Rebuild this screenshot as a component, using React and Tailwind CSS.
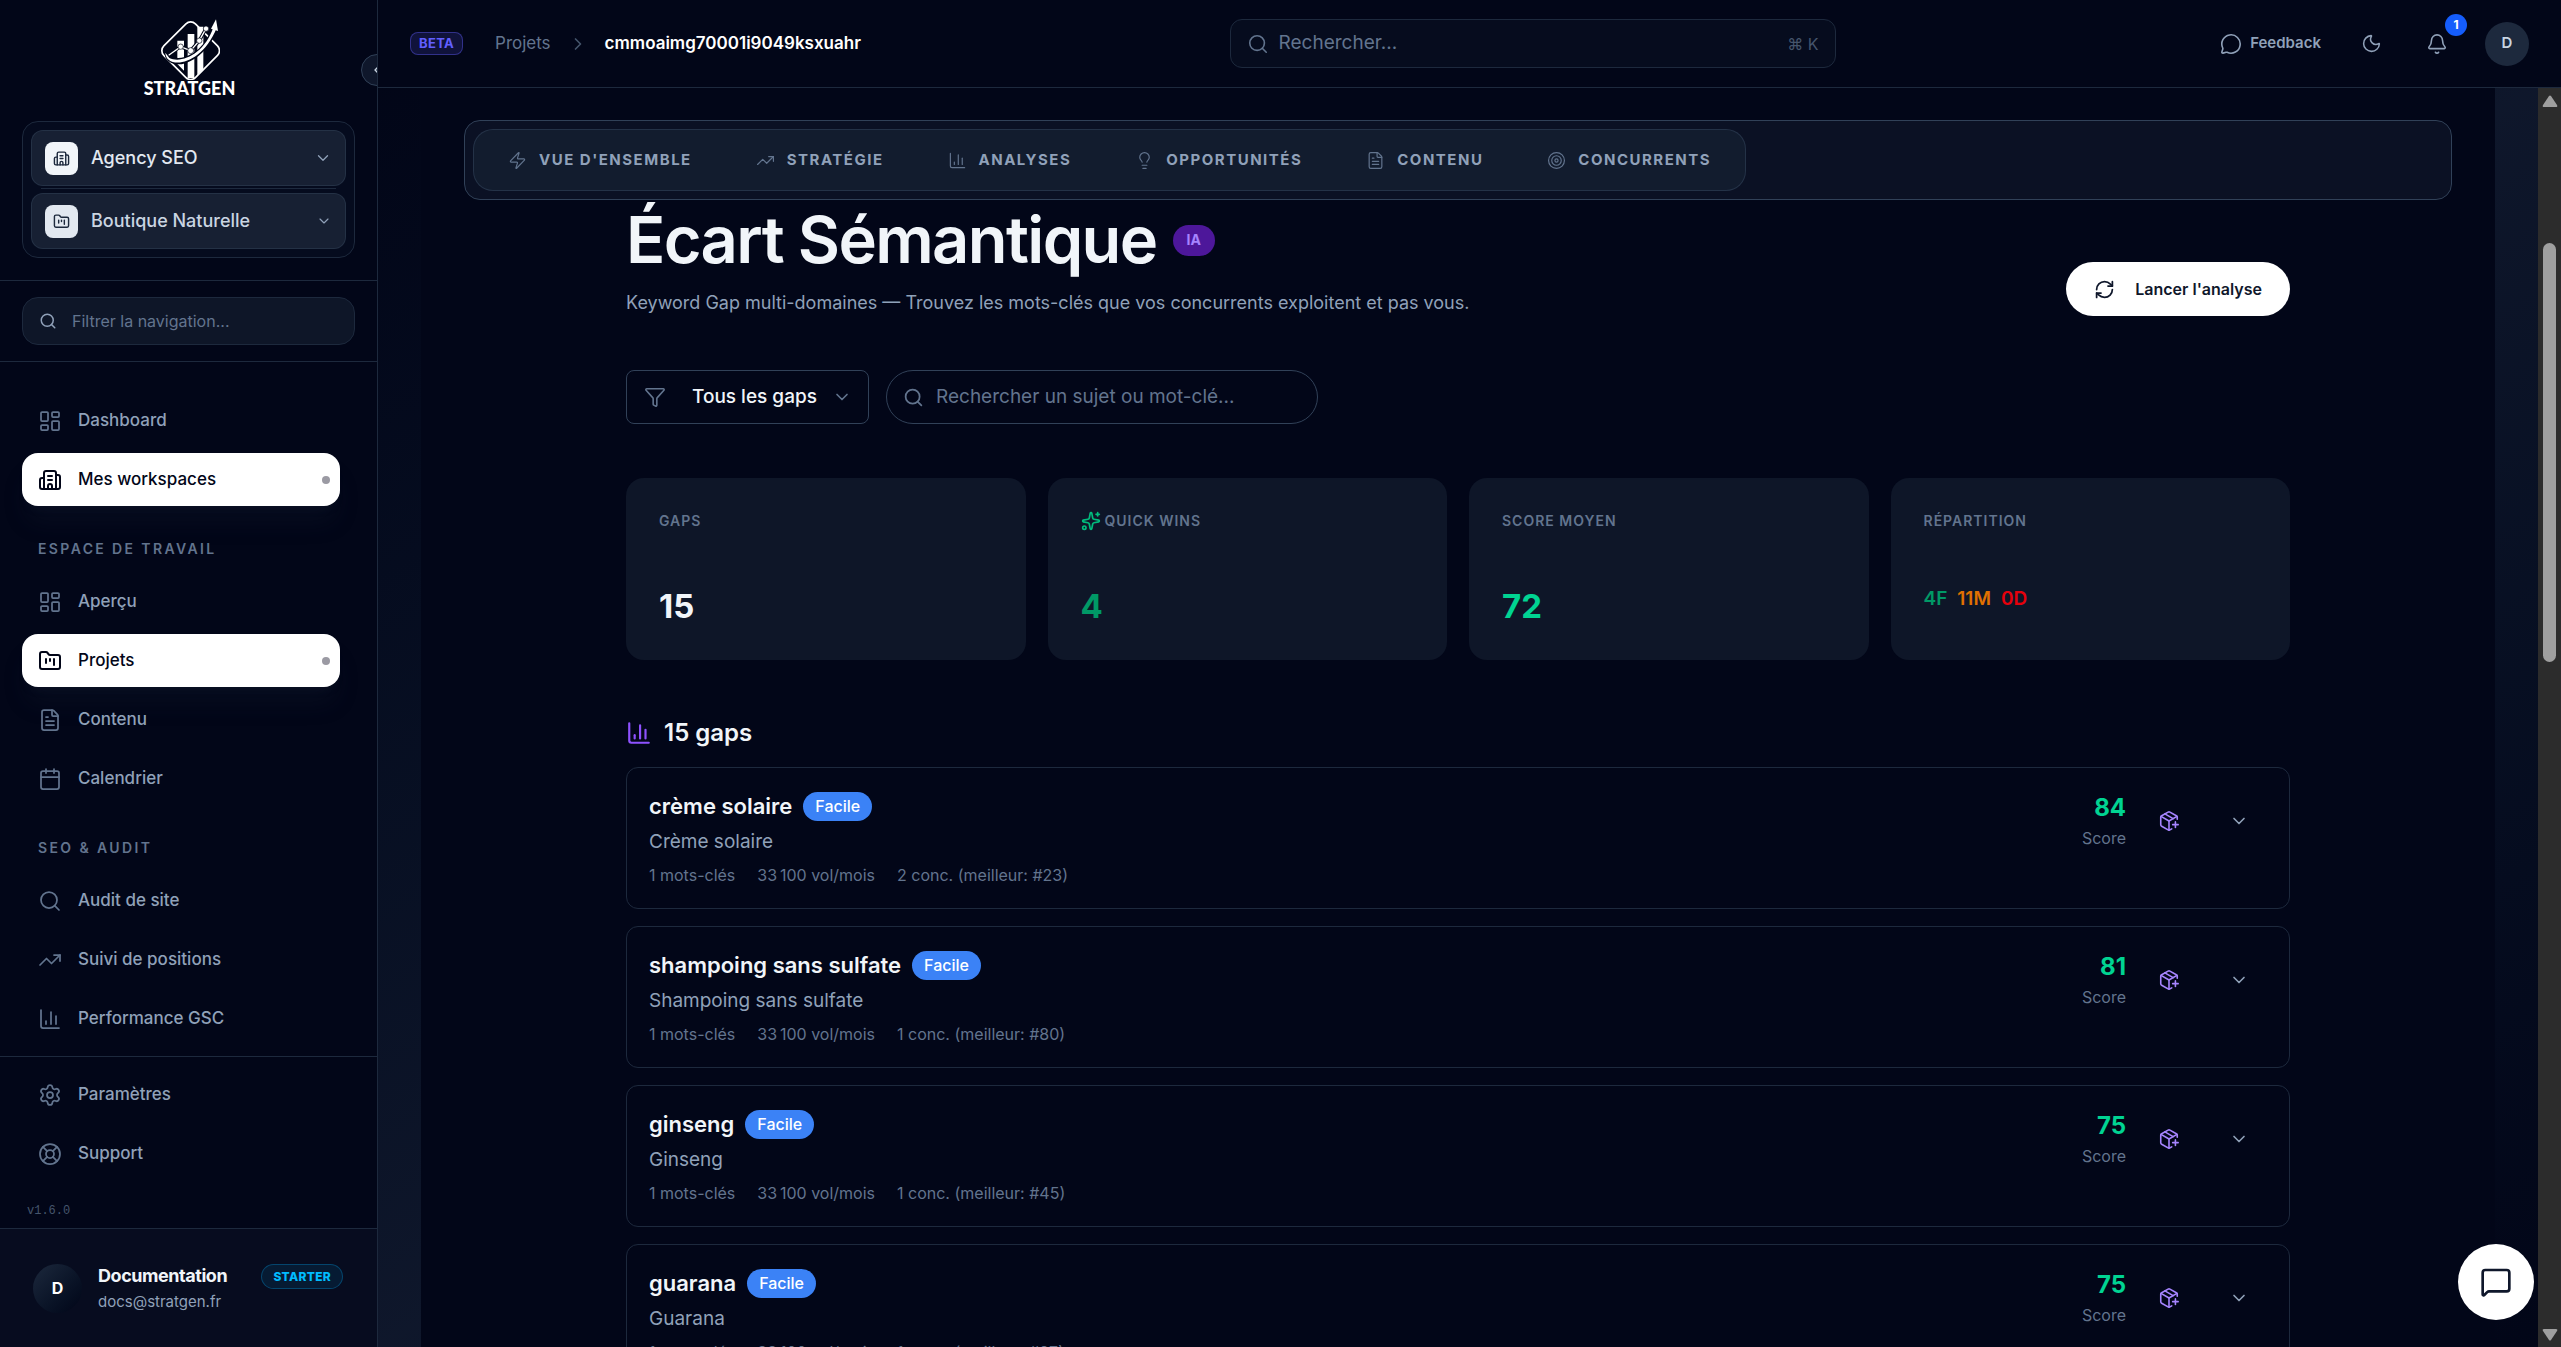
import {
  Bell,
  Building2,
  Calendar,
  ChartColumn,
  ChevronDown,
  ChevronLeft,
  ChevronRight,
  FileText,
  FolderKanban,
  Funnel,
  LayoutDashboard,
  Lightbulb,
  LifeBuoy,
  MessageCircle,
  MessageSquare,
  Moon,
  PackagePlus,
  RefreshCw,
  Search,
  Settings,
  Sparkles,
  Target,
  TrendingUp,
  Zap,
} from 'lucide-react'
import clsx from 'clsx'

const mainLinks = [
  { label: 'Dashboard', icon: LayoutDashboard },
  { label: 'Mes workspaces', icon: Building2, active: true },
]

const workspaceLinks = [
  { label: 'Aperçu', icon: LayoutDashboard },
  { label: 'Projets', icon: FolderKanban, active: true },
  { label: 'Contenu', icon: FileText },
  { label: 'Calendrier', icon: Calendar },
]

const seoLinks = [
  { label: 'Audit de site', icon: Search },
  { label: 'Suivi de positions', icon: TrendingUp },
  { label: 'Performance GSC', icon: ChartColumn },
]

const bottomLinks = [
  { label: 'Paramètres', icon: Settings },
  { label: 'Support', icon: LifeBuoy },
]

const tabs = [
  { label: "Vue d'ensemble", icon: Zap },
  { label: 'Stratégie', icon: TrendingUp },
  { label: 'Analyses', icon: ChartColumn },
  { label: 'Opportunités', icon: Lightbulb },
  { label: 'Contenu', icon: FileText },
  { label: 'Concurrents', icon: Target },
]

const gaps = [
  { keyword: 'crème solaire', topic: 'Crème solaire', competitors: 2, best: 23, score: 84 },
  { keyword: 'shampoing sans sulfate', topic: 'Shampoing sans sulfate', competitors: 1, best: 80, score: 81 },
  { keyword: 'ginseng', topic: 'Ginseng', competitors: 1, best: 45, score: 75 },
  { keyword: 'guarana', topic: 'Guarana', competitors: 1, best: 27, score: 75 },
]

function Logo() {
  return (
    <div className="flex flex-col items-center pl-0.5">
      <svg viewBox="0 0 180 186" className="h-[62px] w-[60px]" fill="none" aria-hidden="true">
        <rect x="25" y="31" width="134" height="134" rx="20" transform="rotate(45 92 98)" stroke="#fff" strokeWidth="5" />
        <path d="M52 68h20v90l-20-20zM83 48h20v132H83zM112 26h18v128l-18 18z" fill="#fff" />
        {/* dark outline under the arrow */}
        <path
          d="M18 106C22 152 116 152 170 32L160 28C136 108 64 138 28 118z"
          fill="#020618"
          stroke="#020618"
          strokeWidth="9"
        />
        <path d="M22 112l40-26 30 12 26-30 20-36" stroke="#020618" strokeWidth="10" />
        <path d="M26 112l36-26 30 12 26-30 20-36" stroke="#fff" strokeWidth="4" />
        <g fill="#fff" stroke="#020618" strokeWidth="2">
          <circle cx="62" cy="86" r="8" />
          <circle cx="92" cy="98" r="9" />
          <circle cx="118" cy="68" r="8" />
          <circle cx="138" cy="32" r="8" />
        </g>
        <path d="M16 104C18 154 122 148 170 30L160 28C134 108 64 138 28 120z" fill="#fff" />
        <path d="M168 4l-15 28 21 7z" fill="#fff" />
      </svg>
      <span className="font-[Lato,sans-serif] text-lg leading-4 font-black text-white">STRATGEN</span>
    </div>
  )
}

function Switcher({ label, icon: Icon, bright }) {
  return (
    <button
      type="button"
      className="flex h-14 w-full items-center rounded-xl border border-slate-700/50 bg-[#172033] px-[13px]"
    >
      <span
        className={clsx(
          'flex size-[33px] items-center justify-center rounded-lg text-slate-800',
          bright ? 'bg-slate-100' : 'bg-slate-200'
        )}
      >
        <Icon size={17} strokeWidth={2} />
      </span>
      <span
        className={clsx(
          'ml-[13px] flex-1 text-left text-lg font-medium',
          bright ? 'text-slate-200' : 'text-slate-300'
        )}
      >
        {label}
      </span>
      <ChevronDown size={bright ? 18 : 16} className="text-slate-400" strokeWidth={1.75} />
    </button>
  )
}

function NavLink({ label, icon: Icon, active }) {
  return (
    <a
      href="#"
      className={clsx(
        'flex h-[53px] items-center gap-4 rounded-2xl px-4 text-[17px] font-medium',
        active ? 'bg-white text-slate-950 shadow-xl shadow-slate-800/20' : 'text-slate-400'
      )}
    >
      <Icon size={24} strokeWidth={active ? 2 : 1.75} className={active ? 'text-slate-950' : 'text-slate-500'} />
      <span className="flex-1">{label}</span>
      {active ? <span className="-mr-1.5 size-2 rounded-full bg-[#9b9aa3]" /> : null}
    </a>
  )
}

function NavSection({ title, links }) {
  return (
    <div>
      {title ? (
        <h2 className="mt-8 mb-[15px] pl-4 text-sm leading-[22px] font-semibold tracking-[0.17em] text-slate-500 uppercase">
          {title}
        </h2>
      ) : null}
      <div className="flex flex-col gap-1.5">
        {links.map((link) => (
          <NavLink key={link.label} {...link} />
        ))}
      </div>
    </div>
  )
}

function Sidebar() {
  return (
    <aside className="relative flex w-[378px] shrink-0 flex-col overflow-hidden border-r border-slate-800 bg-slate-950">
      <div className="px-[22px] pt-[18px] pb-[22px]">
        <Logo />
        <div className="mt-[25px] rounded-2xl border border-slate-800 bg-[#050b1e] p-2">
          <Switcher label="Agency SEO" icon={Building2} bright />
          <div className="mx-2.5 my-0.5 h-px bg-slate-800" />
          <div className="pt-0.5">
            <Switcher label="Boutique Naturelle" icon={FolderKanban} />
          </div>
        </div>
      </div>

      <div className="border-y border-slate-800 px-[22px] py-4">
        <label className="flex h-12 items-center gap-[15px] rounded-2xl border border-slate-800 bg-[#0e1628] px-4">
          <Search size={18} className="text-slate-400" />
          <input
            type="search"
            aria-label="Filtrer la navigation"
            placeholder="Filtrer la navigation..."
            className="min-w-0 flex-1 bg-transparent text-base text-slate-300 outline-none placeholder:text-slate-500"
          />
        </label>
      </div>

      <nav className="min-h-0 flex-1 overflow-hidden pt-8 pr-[37px] pl-[22px]">
        <NavSection links={mainLinks} />
        <NavSection title="Espace de travail" links={workspaceLinks} />
        <NavSection title="SEO & Audit" links={seoLinks} />
      </nav>

      <div className="border-t border-slate-800 px-[22px] pt-[11px]">
        <NavSection links={bottomLinks} />
        <p className="mt-[19px] mb-[5px] pl-[5px] font-['Liberation_Mono',monospace] text-xs leading-6 text-slate-600">
          v1.6.0
        </p>
      </div>

      <div className="flex h-[119px] items-center border-t border-slate-800 bg-[#070c1f] pr-[34px] pl-[33px]">
        <div className="flex size-[49px] shrink-0 items-center justify-center rounded-full bg-linear-to-br from-slate-800 to-slate-950 text-base font-bold text-white">
          D
        </div>
        <div className="ml-4 flex-1">
          <div className="flex items-center justify-between">
            <span className="text-lg leading-7 font-bold tracking-tight text-slate-100">Documentation</span>
            <span className="rounded-full border border-sky-500/30 bg-sky-500/10 px-[11px] text-xs leading-[23px] font-extrabold tracking-wide text-sky-400">
              STARTER
            </span>
          </div>
          <p className="text-[15px] leading-6 text-slate-400">docs@stratgen.fr</p>
        </div>
      </div>

      <button
        type="button"
        aria-label="Réduire le menu"
        className="absolute top-[54px] -right-4 flex size-8 items-center justify-center rounded-full border border-slate-700 bg-slate-900 text-slate-300"
      >
        <ChevronLeft size={16} />
      </button>
    </aside>
  )
}

function TopBar() {
  return (
    <header className="flex h-[88px] shrink-0 items-center justify-between border-b border-slate-800 bg-slate-950 px-8">
      <div className="flex items-center">
        <span className="rounded-lg border border-indigo-500/40 bg-indigo-500/15 px-2 text-[13px] leading-[21px] font-bold tracking-wide text-[#615fff]">
          BETA
        </span>
        <nav aria-label="Fil d'Ariane" className="ml-8 flex items-center text-[17px]">
          <a href="#" className="text-slate-500">Projets</a>
          <ChevronRight size={20} className="mx-[17px] text-slate-600" />
          <span className="font-semibold text-white">cmmoaimg70001i9049ksxuahr</span>
        </nav>
      </div>

      <label className="mr-4 flex h-[49px] w-[606px] items-center rounded-xl border border-slate-800 bg-[#060c1e] px-4">
        <Search size={22} strokeWidth={1.75} className="text-slate-500" />
        <input
          type="search"
          aria-label="Rechercher"
          placeholder="Rechercher..."
          className="ml-2.5 min-w-0 flex-1 bg-transparent text-[19px] text-slate-300 outline-none placeholder:text-slate-500"
        />
        <kbd className="font-[Inter,'DejaVu_Sans',sans-serif] text-base text-slate-600">⌘ K</kbd>
      </label>

      <div className="flex items-center text-slate-400">
        <button type="button" className="flex items-center gap-2 text-[15px] font-semibold">
          <MessageCircle size={22} strokeWidth={1.75} />
          Feedback
        </button>
        <button type="button" aria-label="Thème" className="ml-10">
          <Moon size={21} strokeWidth={1.75} />
        </button>
        <button type="button" aria-label="Notifications" className="relative ml-11">
          <Bell size={22} strokeWidth={1.75} />
          <span className="absolute -top-[19px] -right-[19px] flex size-[22px] items-center justify-center rounded-full bg-[#155dfc] text-xs font-bold text-white">
            1
          </span>
        </button>
        <button
          type="button"
          aria-label="Compte"
          className="ml-[37px] flex size-11 items-center justify-center rounded-full bg-slate-800 text-[15px] font-semibold text-slate-300"
        >
          D
        </button>
      </div>
    </header>
  )
}

function SectionTabs() {
  return (
    <div className="mx-[43px] flex rounded-2xl border border-slate-700 bg-[#0b1124] p-2">
      <nav aria-label="Sections du projet" className="flex rounded-[20px] border border-slate-700/60 bg-[#121c2e] px-0.5">
        {tabs.map(({ label, icon: Icon }) => (
          <a
            key={label}
            href="#"
            className="flex h-[60px] items-center gap-3 px-8 text-[15px] font-bold tracking-widest text-slate-400 uppercase"
          >
            <Icon size={19} strokeWidth={1.5} className="text-slate-500" />
            {label}
          </a>
        ))}
      </nav>
    </div>
  )
}

function PageHeader() {
  return (
    <div className="flex items-end justify-between">
      <div>
        <div className="flex items-center gap-4">
          <h1 className="text-[65px] leading-[66px] font-semibold tracking-tight text-slate-100">Écart Sémantique</h1>
          <span className="flex h-[31px] items-center rounded-full bg-violet-900 px-3.5 text-sm font-bold text-violet-400">
            IA
          </span>
        </div>
        <p className="mt-4 text-lg leading-[27px] text-slate-400">
          Keyword Gap multi-domaines — Trouvez les mots-clés que vos concurrents exploitent et pas vous.
        </p>
      </div>
      <button
        type="button"
        className="flex h-[54px] items-center gap-5 rounded-full bg-white px-7 text-base font-semibold text-slate-900"
      >
        <RefreshCw size={21} />
        Lancer l'analyse
      </button>
    </div>
  )
}

function Filters() {
  return (
    <div className="flex gap-[17px]">
      <label className="relative flex h-[54px] w-[243px] items-center rounded-lg border border-slate-700">
        <Funnel size={22} strokeWidth={1.75} className="pointer-events-none absolute left-[17px] text-slate-500" />
        <select
          aria-label="Filtrer les gaps"
          className="h-full w-full appearance-none bg-transparent pl-[65px] text-[19px] font-medium text-slate-100 outline-none"
        >
          <option>Tous les gaps</option>
        </select>
        <ChevronDown size={20} className="pointer-events-none absolute right-4 text-slate-500" />
      </label>
      <label className="flex h-[54px] w-[432px] items-center gap-3 rounded-full border border-slate-700 px-4">
        <Search size={21} className="text-slate-500" />
        <input
          type="search"
          aria-label="Rechercher un sujet"
          placeholder="Rechercher un sujet ou mot-clé..."
          className="min-w-0 flex-1 bg-transparent text-[19px] text-slate-300 outline-none placeholder:text-slate-500"
        />
      </label>
    </div>
  )
}

function StatCard({ label, icon, children }) {
  return (
    <div className="h-[182px] rounded-[18px] bg-[#0e1628] px-[33px] pt-8">
      <div className="flex h-[21px] items-center gap-1 text-sm font-semibold tracking-[1px] text-slate-500 uppercase">
        {icon}
        {label}
      </div>
      <div className="mt-[55px] text-[33px] leading-10 font-bold">{children}</div>
    </div>
  )
}

function Stats() {
  return (
    <div className="grid grid-cols-4 gap-[22px]">
      <StatCard label="Gaps">
        <span className="text-slate-100">15</span>
      </StatCard>
      <StatCard label="Quick wins" icon={<Sparkles size={20} className="text-emerald-500" />}>
        <span className="text-emerald-600">4</span>
      </StatCard>
      <StatCard label="Score moyen">
        <span className="text-emerald-400">72</span>
      </StatCard>
      <StatCard label="Répartition">
        <div className="flex gap-2.5 text-[19px] leading-[26px] font-semibold">
          <span className="text-emerald-600">4F</span>
          <span className="text-amber-600">11M</span>
          <span className="text-red-600">0D</span>
        </div>
      </StatCard>
    </div>
  )
}

function GapCard({ keyword, topic, competitors, best, score }) {
  return (
    <li className="flex h-[142px] justify-between rounded-xl border border-slate-800 px-[22px] pt-[22px]">
      <div>
        <div className="flex items-center gap-[11px]">
          <h3 className="text-[22px] leading-8 font-semibold text-slate-100">{keyword}</h3>
          <span className="rounded-full bg-[#3b82f6] px-3 text-base leading-[29px] font-medium text-white">Facile</span>
        </div>
        <p className="mt-1.5 text-[19px] leading-7 text-slate-400">{topic}</p>
        <div className="mt-[7px] flex gap-[22px] text-base leading-6 text-slate-500">
          <span>1 mots-clés</span>
          <span>33&#8239;100 vol/mois</span>
          <span>
            {competitors} conc. (meilleur: #{best})
          </span>
        </div>
      </div>
      <div className="flex h-[58px] items-center pt-1">
        <div className="pt-0.5 text-right">
          <div className="text-2xl leading-8 font-bold text-emerald-400">{score}</div>
          <div className="text-base leading-7 text-slate-500">Score</div>
        </div>
        <button type="button" aria-label="Ajouter au plan" className="ml-8 text-violet-400">
          <PackagePlus size={22} strokeWidth={1.75} />
        </button>
        <button type="button" aria-label="Détails" className="mr-[18px] ml-[49px] text-slate-400">
          <ChevronDown size={20} />
        </button>
      </div>
    </li>
  )
}

function Scrollbar() {
  return (
    <div className="flex w-[23px] shrink-0 flex-col items-center bg-[#2c2c2c] pt-[7px] pb-1.5" aria-hidden="true">
      <svg viewBox="0 0 16 12" className="h-3 w-4" fill="#9f9f9f">
        <path d="M7 1q1-1 2 0l6 9q1 2-1 2H2q-2 0-1-2z" />
      </svg>
      <div className="mt-[136px] h-[419px] w-[13px] rounded-full bg-[#9f9f9f]" />
      <svg viewBox="0 0 16 12" className="mt-auto h-3 w-4" fill="#9f9f9f">
        <path d="M7 11q1 1 2 0l6-9q1-2-1-2H2q-2 0-1 2z" />
      </svg>
    </div>
  )
}

export default function App() {
  return (
    <div className="flex h-screen overflow-hidden bg-slate-950 font-[Inter,sans-serif]">
      <Sidebar />
      <div className="flex min-w-0 flex-1 flex-col">
        <TopBar />
        <div className="flex min-h-0 flex-1">
          <main className="min-w-0 flex-1 overflow-hidden bg-linear-to-br from-slate-950 via-slate-900 to-slate-950 px-[43px]">
            <div className="min-h-full bg-slate-950 pt-8">
              <SectionTabs />
              <div className="mx-auto max-w-[1664px] pt-[7px]">
                <PageHeader />
                <div className="mt-[54px]">
                  <Filters />
                </div>
                <div className="mt-[54px]">
                  <Stats />
                </div>
                <section className="mt-[55px]">
                  <h2 className="flex items-center gap-3 text-2xl leading-9 font-semibold text-slate-100">
                    <ChartColumn size={26} className="text-violet-500" />
                    15 gaps
                  </h2>
                  <ul className="mt-4 flex flex-col gap-[17px]">
                    {gaps.map((gap) => (
                      <GapCard key={gap.keyword} {...gap} />
                    ))}
                  </ul>
                </section>
              </div>
            </div>
          </main>
          <Scrollbar />
        </div>
      </div>
      <button
        type="button"
        aria-label="Ouvrir le chat"
        className="fixed right-[27px] bottom-[27px] flex size-[76px] items-center justify-center rounded-full bg-white text-slate-900"
      >
        <MessageSquare size={32} />
      </button>
    </div>
  )
}
